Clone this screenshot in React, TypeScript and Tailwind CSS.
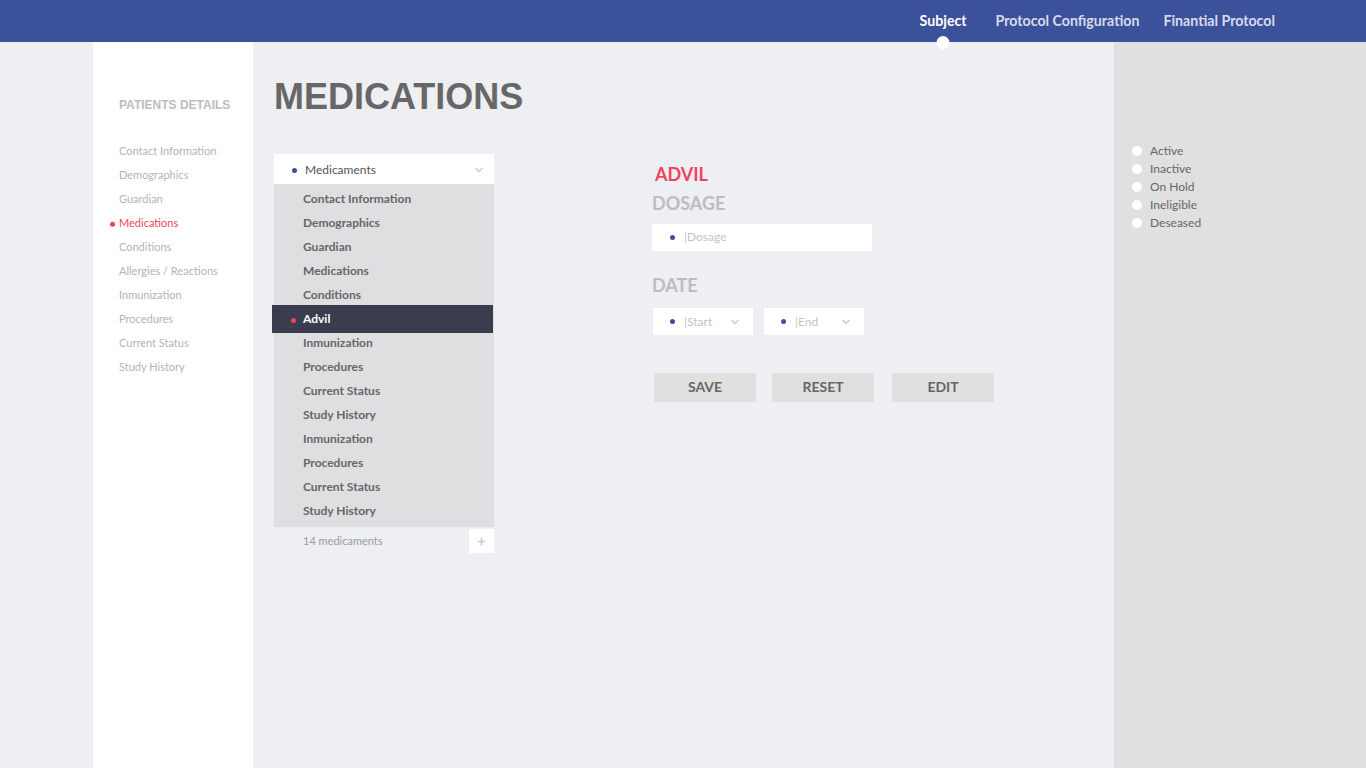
import { ChevronDown, Plus } from 'lucide-react'

const SIDE = [
  'Contact Information',
  'Demographics',
  'Guardian',
  'Medications',
  'Conditions',
  'Allergies / Reactions',
  'Inmunization',
  'Procedures',
  'Current Status',
  'Study History',
]

const LIST = [
  'Contact Information',
  'Demographics',
  'Guardian',
  'Medications',
  'Conditions',
  'Advil',
  'Inmunization',
  'Procedures',
  'Current Status',
  'Study History',
  'Inmunization',
  'Procedures',
  'Current Status',
  'Study History',
]

const STATUS = ['Active', 'Inactive', 'On Hold', 'Ineligible', 'Deseased']

function Dot({ red }: { red?: boolean }) {
  return <span className={`inline-block w-[5px] h-[5px] rounded-full ${red ? 'bg-[#f0435e]' : 'bg-[#3b5199]'}`} />
}

function SelectBox({ label }: { label: string }) {
  return (
    <div className="w-[100px] h-[27px] bg-white flex items-center pl-[17px] pr-[12px] text-[12px] text-[#c4c4c4]">
      <Dot />
      <span className="ml-[9px] flex-1 leading-[14px]">|{label}</span>
      <ChevronDown size={12} strokeWidth={3.5} className="text-[#cfcfcf]" />
    </div>
  )
}

export default function App() {
  return (
    <div className="w-[1366px] h-[768px] bg-[#eeeff3] flex flex-col overflow-hidden font-['Lato','Noto_Sans',sans-serif]">
      {/* header */}
      <div className="h-[42px] bg-[#3b5199] flex items-center justify-end pr-[91px] text-[14.2px] font-bold shrink-0 relative z-10">
        <div className="relative h-full flex items-center text-white pb-[1px]">
          Subject
          <span className="absolute bottom-[-7px] left-1/2 -translate-x-1/2 w-[13px] h-[13px] rounded-full bg-white" />
        </div>
        <div className="ml-[29px] text-[#d6dbec] pb-[1px]">Protocol Configuration</div>
        <div className="ml-[24px] text-[#d6dbec] pb-[1px]">Finantial Protocol</div>
      </div>

      <div className="flex flex-1 min-h-0">
        <div className="w-[93px]" />

        {/* left sidebar */}
        <div className="w-[160px] bg-white pl-[26px] pt-[56px]">
          <div className="font-['Liberation_Sans',Arial,sans-serif] font-bold text-[12px] text-[#bdbdbd] leading-[14px]">
            PATIENTS DETAILS
          </div>
          <div className="mt-[27px] flex flex-col">
            {SIDE.map((s) => (
              <div
                key={s}
                className={`relative h-[24px] flex items-center text-[11px] ${s === 'Medications' ? 'text-[#f0435e]' : 'text-[#b4b4b4]'}`}
              >
                {s === 'Medications' && (
                  <span className="absolute left-[-9px] top-1/2 -translate-y-1/2">
                    <Dot red />
                  </span>
                )}
                {s}
              </div>
            ))}
          </div>
        </div>

        {/* main */}
        <div className="w-[861px] pl-[21px] pt-[35px]">
          <h1 className="font-['Liberation_Sans',Arial,sans-serif] font-bold text-[36px] leading-[40px] text-[#676767]">
            MEDICATIONS
          </h1>

          <div className="flex mt-[37px]">
            {/* medicaments dropdown */}
            <div className="w-[220px]">
              <div className="h-[30px] bg-white flex items-center pl-[18px] pr-[9px] pt-[2px] text-[12px] text-[#555]">
                <Dot />
                <span className="ml-[8px] flex-1">Medicaments</span>
                <ChevronDown size={12} strokeWidth={3.5} className="text-[#cfcfcf]" />
              </div>
              <div className="bg-[#dfdfe1] pt-[3px] pb-[4px]">
                {LIST.map((s, i) =>
                  s === 'Advil' ? (
                    <div
                      key={i}
                      className="relative ml-[-2px] mr-[1px] h-[28px] my-[-2px] bg-[#3a3d4e] flex items-center text-[12px] font-bold text-white pl-[31px]"
                    >
                      <span className="absolute left-[19px] top-1/2 -translate-y-1/2">
                        <Dot red />
                      </span>
                      {s}
                    </div>
                  ) : (
                    <div key={i} className="h-[24px] flex items-center pl-[29px] text-[12px] font-bold text-[#666]">
                      {s}
                    </div>
                  )
                )}
              </div>
              <div className="flex items-center justify-between mt-[2px]">
                <span className="pl-[29px] text-[11px] text-[#9b9b9b]">14 medicaments</span>
                <div className="w-[25px] h-[24px] bg-white flex items-center justify-center">
                  <Plus size={11} strokeWidth={3.5} className="text-[#cccccc]" />
                </div>
              </div>
            </div>

            {/* form */}
            <div className="ml-[158px] mt-[10px]">
              <div className="pl-[3px] text-[18px] font-bold leading-[20px] text-[#f0435e]">ADVIL</div>
              <div className="mt-[9px] text-[18px] font-bold leading-[20px] text-[#bdbdbd]">DOSAGE</div>
              <div className="mt-[11px] w-[220px] h-[27px] bg-white flex items-center pl-[18px] pb-[1px] text-[12px] text-[#c4c4c4]">
                <Dot />
                <span className="ml-[9px]">|Dosage</span>
              </div>
              <div className="mt-[24px] text-[18px] font-bold leading-[20px] text-[#bdbdbd]">DATE</div>
              <div className="mt-[13px] ml-[1px] flex gap-[11px]">
                <SelectBox label="Start" />
                <SelectBox label="End" />
              </div>
              <div className="mt-[38px] ml-[2px] flex gap-[16px]">
                {['SAVE', 'RESET', 'EDIT'].map((b, i) => (
                  <button
                    key={b}
                    className={`w-[102px] h-[29px] pb-[2px] bg-[#e0e0e0] text-[14px] font-bold text-[#666] ${i === 2 ? 'ml-[2px]' : ''}`}
                  >
                    {b}
                  </button>
                ))}
              </div>
            </div>
          </div>
        </div>

        {/* right panel */}
        <div className="flex-1 bg-[#e0e0e0] pl-[18px] pt-[100px]">
          {STATUS.map((s) => (
            <div key={s} className="h-[18px] flex items-center text-[12px] text-[#666]">
              <span className="w-[10px] h-[10px] rounded-full bg-white mr-[8px]" />
              {s}
            </div>
          ))}
        </div>
      </div>
    </div>
  )
}
